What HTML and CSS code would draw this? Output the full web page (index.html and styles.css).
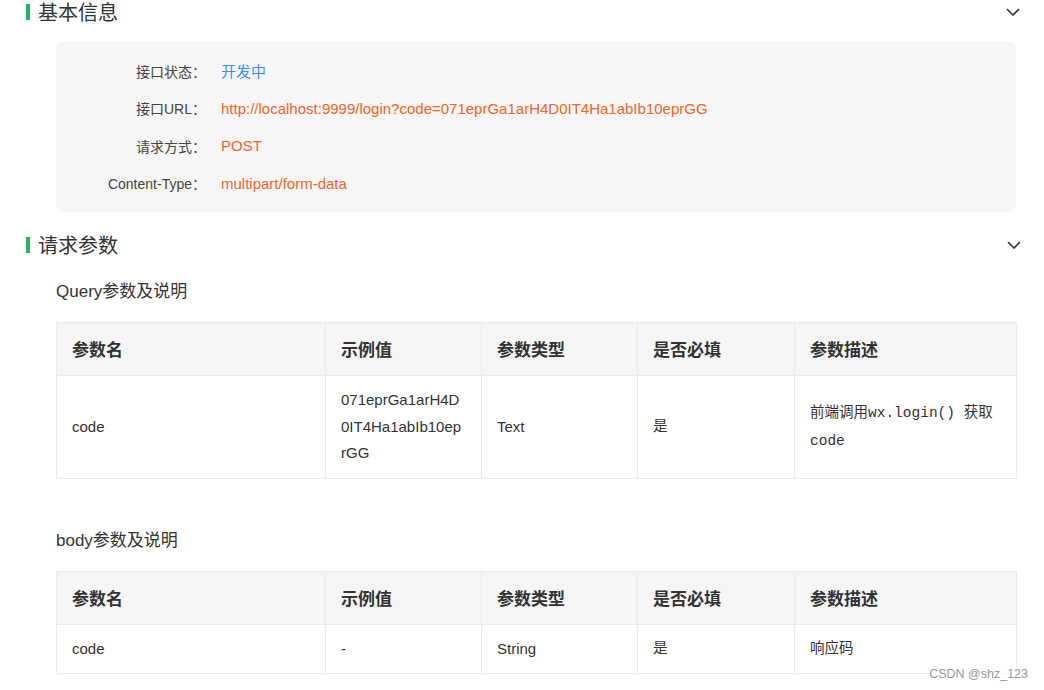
FILE: index.html
```html
<!DOCTYPE html>
<html lang="zh-CN">
<head>
<meta charset="utf-8">
<title>接口文档</title>
<link rel="stylesheet" href="styles.css">
</head>
<body>
<div class="page">
  <div class="section-title first">
    <span class="bar"></span>
    <span class="title-text">基本信息</span>
    <svg class="chevron" width="14" height="8" viewBox="0 0 14 8"><polyline points="1,1 7,7 13,1" fill="none" stroke="#333" stroke-width="1.6"/></svg>
  </div>
  <div class="info-box">
    <div class="info-row"><span class="label">接口状态：</span><span class="value blue">开发中</span></div>
    <div class="info-row"><span class="label">接口URL：</span><span class="value orange">http://localhost:9999/login?code=071eprGa1arH4D0IT4Ha1abIb10eprGG</span></div>
    <div class="info-row"><span class="label">请求方式：</span><span class="value orange">POST</span></div>
    <div class="info-row"><span class="label">Content-Type：</span><span class="value orange">multipart/form-data</span></div>
  </div>

  <div class="section-title second">
    <span class="bar"></span>
    <span class="title-text">请求参数</span>
    <svg class="chevron" width="14" height="8" viewBox="0 0 14 8"><polyline points="1,1 7,7 13,1" fill="none" stroke="#333" stroke-width="1.6"/></svg>
  </div>

  <div class="sub">
    <div class="sub-title">Query参数及说明</div>
    <table class="params">
      <colgroup><col class="c1"><col class="c2"><col class="c3"><col class="c4"><col class="c5"></colgroup>
      <thead><tr><th>参数名</th><th>示例值</th><th>参数类型</th><th>是否必填</th><th>参数描述</th></tr></thead>
      <tbody><tr><td>code</td><td class="wrap">071eprGa1arH4D0IT4Ha1abIb10eprGG</td><td>Text</td><td class="song">是</td><td class="song desc">前端调用wx.login() 获取code</td></tr></tbody>
    </table>

    <div class="sub-title body-title">body参数及说明</div>
    <table class="params">
      <colgroup><col class="c1"><col class="c2"><col class="c3"><col class="c4"><col class="c5"></colgroup>
      <thead><tr><th>参数名</th><th>示例值</th><th>参数类型</th><th>是否必填</th><th>参数描述</th></tr></thead>
      <tbody><tr><td>code</td><td>-</td><td>String</td><td class="song">是</td><td class="song">响应码</td></tr></tbody>
    </table>
  </div>
  <div class="watermark">CSDN @shz_123</div>
</div>
</body>
</html>
```
FILE: styles.css
```css
html, body {
  margin: 0;
  padding: 0;
  background: #fff;
}
body {
  font-family: "Liberation Sans", "Noto Sans CJK SC", sans-serif;
  color: #333;
}
.page {
  position: relative;
  width: 1044px;
  height: 690px;
  overflow: hidden;
}
.section-title {
  display: flex;
  align-items: center;
  height: 24px;
  padding-left: 26px;
  width: 994px;
}
.section-title.first { margin-top: 0; }
.section-title.second { margin-top: 21px; }
.bar {
  width: 4px;
  height: 16px;
  background: #21b562;
}
.title-text {
  margin-left: 8px;
  font-size: 20px;
  line-height: 24px;
  color: #333;
  font-family: "Noto Sans CJK SC", sans-serif;
}
.chevron {
  margin-left: auto;
}
.section-title.second .chevron { margin-right: -1px; }
.info-box {
  margin: 18px 0 0 56px;
  width: 960px;
  height: 170px;
  box-sizing: border-box;
  padding: 10px 0;
  background: #f6f6f6;
  border-radius: 7px;
}
.info-row {
  display: flex;
  align-items: center;
  height: 37.5px;
  font-size: 14px;
}
.label {
  width: 150px;
  text-align: right;
  color: #444;
}
.value {
  margin-left: 15px;
  font-size: 15px;
}
.blue { color: #3f8cff; }
.orange { color: #f2652a; }
.sub {
  margin-left: 56px;
  width: 960px;
}
.sub-title {
  margin-top: 23px;
  font-size: 17px;
  line-height: 24px;
  color: #333;
}
.sub-title.body-title { margin-top: 50px; }
.params {
  margin-top: 18px;
  width: 960px;
  table-layout: fixed;
  border-collapse: collapse;
  border: 1px solid #ebebeb;
}
.c1 { width: 269px; }
.c2 { width: 156px; }
.c3 { width: 156px; }
.c4 { width: 157px; }
.c5 { width: 222px; }
.params th {
  background: #f5f5f5;
  font-size: 17px;
  font-weight: bold;
  text-align: left;
  padding: 13px 15px;
  line-height: 26px;
  border: 1px solid #ebebeb;
  color: #333;
  font-family: "Noto Sans CJK SC", sans-serif;
}
.params td {
  font-size: 15px;
  line-height: 26px;
  padding: 11px 15px;
  border: 1px solid #ebebeb;
  color: #333;
  vertical-align: middle;
}
.params td.wrap {
  word-break: break-all;
  line-height: 26.5px;
}
.params td.song {
  font-family: "Liberation Mono", "Noto Sans CJK SC", monospace;
  font-size: 14.5px;
  color: #333;
}
.params td.desc {
  line-height: 28px;
}
.watermark {
  position: absolute;
  right: 16px;
  top: 667px;
  font-size: 12.5px;
  color: #9a9a9a;
  background: rgba(255,255,255,0.6);
}
```
